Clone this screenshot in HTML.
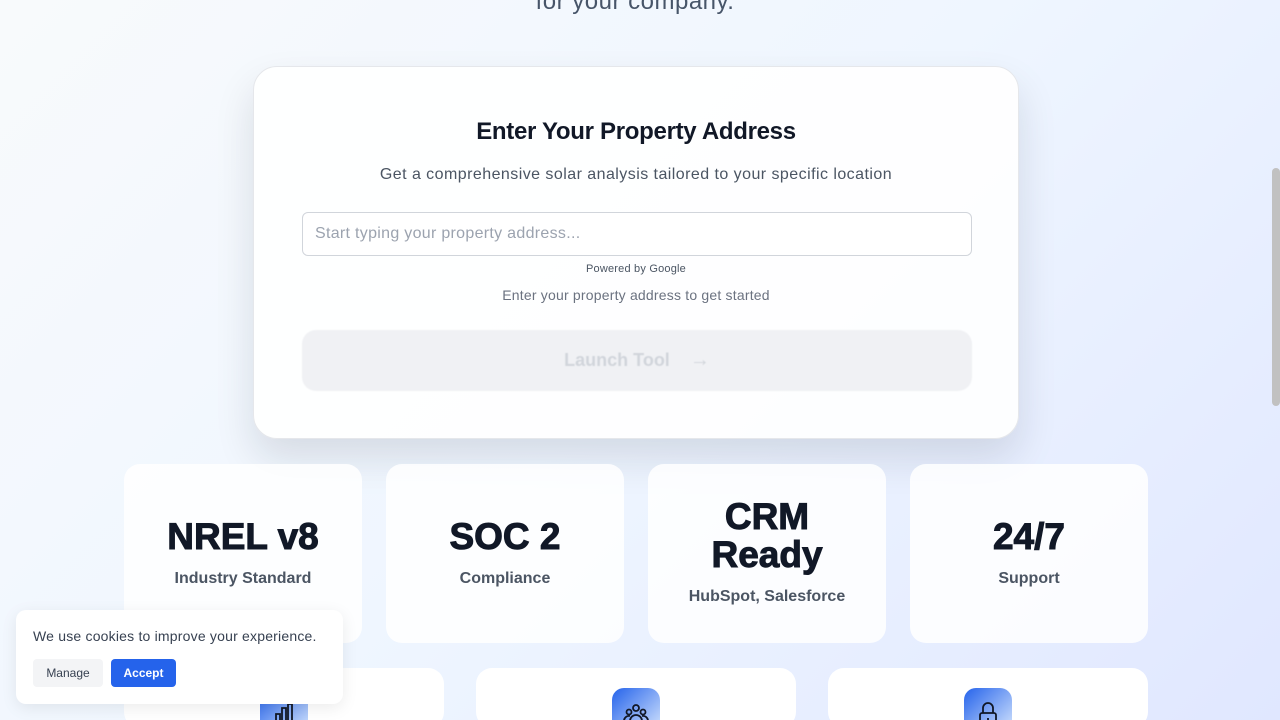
<!DOCTYPE html>
<html><head><style>
*{box-sizing:border-box;margin:0;padding:0}
html,body{width:1280px;height:720px;overflow:hidden}
body{font-family:"Liberation Sans",sans-serif;background:linear-gradient(135deg,#f8fafc 0%,#eff6ff 50%,#e0e7ff 100%);position:relative;color:#0f172a}
.top{position:absolute;top:-12px;left:0;width:1270px;text-align:center;font-size:24px;color:#475569;letter-spacing:.5px}
.card{position:absolute;left:253px;top:66px;width:766px;height:373px;background:rgba(255,255,255,.9);border-radius:24px;box-shadow:0 20px 40px rgba(15,23,42,.12);border:1px solid #e5e7eb;text-align:center}
h2{position:absolute;top:51px;width:100%;font-size:24px;font-weight:700;color:#111827;letter-spacing:-.3px}
.sub{position:absolute;top:99px;width:100%;font-size:16px;color:#4b5563;letter-spacing:.45px}
.inp{position:absolute;left:48px;top:145px;width:670px;height:44px;border:1px solid #d1d5db;border-radius:6px;background:#fff;text-align:left;padding:12px 12px;font-size:16px;color:#9ca3af;letter-spacing:.3px}
.pw{position:absolute;top:196px;width:100%;font-size:11px;color:#4b5563;letter-spacing:.2px}
.hint{position:absolute;top:220px;width:100%;font-size:14px;color:#6b7280;letter-spacing:.2px}
.btn{position:absolute;left:48px;top:263px;width:670px;height:61px;border-radius:14px;background:#f0f1f4;font-size:18px;font-weight:700;color:#d1d5db;line-height:61px;filter:blur(.6px)}
.btn i{font-style:normal;font-size:20px}
.stat{position:absolute;top:464px;width:238px;height:179px;background:rgba(255,255,255,.85);border-radius:16px;text-align:center}
.stat b{display:block;font-size:37px;font-weight:900;color:#111827;line-height:38px;-webkit-text-stroke:1px #111827}
.stat span{display:block;font-size:16px;font-weight:700;color:#4b5563;margin-top:14px}
.f{position:absolute;top:668px;height:60px;background:#fff;border-radius:16px}
.ic{position:absolute;top:688px;width:48px;height:48px;border-radius:12px;background:linear-gradient(135deg,#2563eb,#dbeafe)}
.ck{position:absolute;left:16px;top:610px;width:327px;height:94px;background:#fff;border-radius:10px;box-shadow:0 4px 16px rgba(0,0,0,.08)}
.ck p{position:absolute;left:17px;top:18px;font-size:14px;color:#374151;letter-spacing:.2px}
.m{position:absolute;left:17px;top:49px;width:70px;height:28px;background:#f3f4f6;border-radius:4px;font-size:12px;color:#374151;text-align:center;line-height:28px}
.a{position:absolute;left:95px;top:49px;width:65px;height:28px;background:#2563eb;border-radius:4px;font-size:12px;font-weight:700;color:#fff;text-align:center;line-height:28px}
.sb{position:absolute;right:0;top:168px;width:8px;height:238px;background:#c1c1c1;border-radius:4px}
</style></head><body>
<div class="top">for your company.</div>
<div class="card">
<h2>Enter Your Property Address</h2>
<div class="sub">Get a comprehensive solar analysis tailored to your specific location</div>
<div class="inp">Start typing your property address...</div>
<div class="pw">Powered by Google</div>
<div class="hint">Enter your property address to get started</div>
<div class="btn">Launch Tool &nbsp;&nbsp; <i>→</i></div>
</div>
<div class="stat" style="left:124px"><b style="margin-top:54px">NREL v8</b><span>Industry Standard</span></div>
<div class="stat" style="left:386px"><b style="margin-top:54px">SOC 2</b><span>Compliance</span></div>
<div class="stat" style="left:648px"><b style="margin-top:34px">CRM<br>Ready</b><span>HubSpot, Salesforce</span></div>
<div class="stat" style="left:910px"><b style="margin-top:54px">24/7</b><span>Support</span></div>
<div class="f" style="left:124px;width:320px"></div>
<div class="f" style="left:476px;width:320px"></div>
<div class="f" style="left:828px;width:320px"></div>
<div class="ic" style="left:260px"><svg width="48" height="48" viewBox="0 0 48 48" fill="none" stroke="#111827" stroke-width="1.8"><path d="M16 40V26h4v14M22 40V20h4v20M28 40V16h4v24"/></svg></div>
<div class="ic" style="left:612px"><svg width="48" height="48" viewBox="0 0 48 48" fill="none" stroke="#111827" stroke-width="1.8"><circle cx="24" cy="20" r="3"/><circle cx="17" cy="24" r="2.5"/><circle cx="31" cy="24" r="2.5"/><path d="M18 33a6 6 0 0 1 12 0M12 33a5 5 0 0 1 6-5M36 33a5 5 0 0 0-6-5"/></svg></div>
<div class="ic" style="left:964px"><svg width="48" height="48" viewBox="0 0 48 48" fill="none" stroke="#111827" stroke-width="1.8"><rect x="16" y="25" width="16" height="12" rx="2"/><path d="M19 25v-5a5 5 0 0 1 10 0v5M24 30v3"/></svg></div>
<div class="ck"><p>We use cookies to improve your experience.</p><div class="m">Manage</div><div class="a">Accept</div></div>
<div class="sb"></div>
</body></html>
